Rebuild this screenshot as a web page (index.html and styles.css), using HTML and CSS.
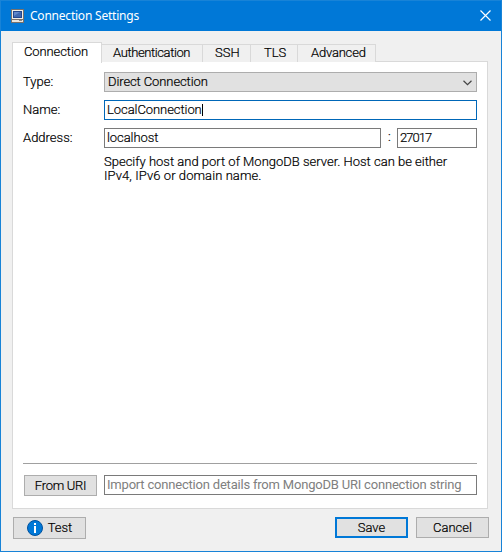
FILE: index.html
```html
<!DOCTYPE html>
<html lang="en">
<head>
<meta charset="utf-8">
<title>Connection Settings</title>
<link rel="stylesheet" href="styles.css">
</head>
<body>
<div class="window">
  <header class="titlebar">
    <svg class="app-icon" width="13" height="14" viewBox="0 0 13 14">
      <rect x="0" y="0" width="13" height="14" fill="#77716c"/>
      <rect x="1" y="1" width="11" height="9" fill="#f1eee8"/>
      <rect x="2" y="2" width="9" height="7" fill="#24488f"/>
      <rect x="3" y="3" width="7" height="5" fill="#6288cb"/>
      <path d="M3 8V7L9 3H10V8Z" fill="#3f68b0"/>
      <rect x="1" y="11" width="11" height="2" fill="#e9e4dc"/>
      <rect x="8" y="11" width="3" height="1" fill="#8a8580"/>
    </svg>
    <span class="title">Connection Settings</span>
    <svg class="close" width="11" height="11" viewBox="0 0 11 11"><path d="M.5 .5L10.500 10.500M10.500 .5L.5 10.500" stroke="#fff" stroke-width="1.15"/></svg>
  </header>
  <nav class="tabs">
    <div class="tab tab-active"><span class="t-connection">Connection</span></div>
    <div class="tab tab-auth"><span class="t-auth">Authentication</span></div>
    <div class="tab tab-ssh"><span class="t-ssh">SSH</span></div>
    <div class="tab tab-tls"><span class="t-tls">TLS</span></div>
    <div class="tab tab-adv"><span class="t-adv">Advanced</span></div>
  </nav>
  <main class="panel">
    <div class="row">
      <span class="label"><span class="t-type">Type:</span></span>
      <div class="field select"><span class="t-direct">Direct Connection</span>
        <svg class="chevron" width="9" height="6" viewBox="0 0 9 6"><path d="M.5 .8L4.500 4.700L8.500 .8" fill="none" stroke="#444" stroke-width="1.2"/></svg>
      </div>
    </div>
    <div class="row">
      <span class="label"><span class="t-name">Name:</span></span>
      <div class="field focused"><span class="t-local">LocalConnection</span><i class="caret"></i></div>
    </div>
    <div class="row">
      <span class="label"><span class="t-address">Address:</span></span>
      <div class="field"><span class="t-host">localhost</span></div>
      <span class="colon">:</span>
      <div class="field port"><span class="t-port">27017</span></div>
    </div>
    <p class="help"><span class="t-help1">Specify host and port of MongoDB server. Host can be either</span><br><span class="t-help2">IPv4, IPv6 or domain name.</span></p>
    <div class="rule"></div>
    <div class="uri">
      <div class="button"><span class="t-uri">From URI</span></div>
      <div class="field placeholder"><span class="t-import">Import connection details from MongoDB URI connection string</span></div>
    </div>
  </main>
  <footer class="footer">
    <div class="button test">
      <svg width="16" height="16" viewBox="0 0 16 16"><circle cx="8" cy="8" r="7.500" fill="#0078d7" stroke="#00519e"/><rect x="7" y="3" width="2" height="2" fill="#fff"/><rect x="7" y="6" width="2" height="7" fill="#fff"/></svg>
      <span class="t-test">Test</span>
    </div>
    <div class="button save"><span class="t-save">Save</span></div>
    <div class="button"><span class="t-cancel">Cancel</span></div>
  </footer>
</div>
</body>
</html>
```
FILE: styles.css
```css
* { box-sizing: border-box; }
body { margin: 0; font: 300 13px/14px Roboto, "Liberation Sans", sans-serif; color: #000; -webkit-text-stroke: 0.2px; }
span { white-space: nowrap; }
.window { width: 502px; height: 552px; background: #f0f0f0; border: 1px solid #1883d7; display: flex; flex-direction: column; }
.titlebar { height: 30px; flex: none; background: #0078d7; color: #fff; display: flex; align-items: center; padding: 0 10px; -webkit-text-stroke: 0; }
.app-icon { margin-right: 6px; margin-top: -1px; }
.title { font: 12px/16px "Noto Sans", sans-serif; letter-spacing: -0.22px; }
.close { margin: -1px 0 0 auto; }
.tabs { height: 31px; flex: none; margin-left: 11px; display: flex; align-items: flex-end; position: relative; z-index: 1; }
.tab { height: 18px; background: #f0f0f0; border-top: 1px solid #d9d9d9; border-right: 1px solid #d9d9d9; padding-left: 11px; line-height: 16px; }
.tab-active { height: 21px; width: 90px; margin-bottom: -1px; background: #fff; border-left: 1px solid #d9d9d9; line-height: 17px; }
.tab-auth { width: 101px; }
.tab-ssh { width: 48px; padding-left: 12px; }
.tab-tls { width: 47px; padding-left: 13px; }
.tab-adv { width: 78px; padding-left: 13px; }
.panel { height: 448px; flex: none; margin: -1px 13px 0 11px; background: #fff; border: 1px solid #d9d9d9; padding: 10px 10px 12px; display: flex; flex-direction: column; }
.row { display: flex; height: 20px; margin-bottom: 8px; flex: none; }
.label { width: 81px; line-height: 19px; flex: none; }
.field { flex: 1; height: 20px; border: 1px solid #7a7a7a; background: #fff; padding-left: 2px; line-height: 18px; display: flex; align-items: center; }
.select { background: #e1e1e1; border-color: #adadad; padding-left: 3px; }
.chevron { margin: 2px 4px 0 auto; }
.focused { border-color: #0067b8; }
.caret { width: 1px; height: 12px; background: #000; }
.colon { width: 16px; padding-left: 7px; line-height: 18px; }
.port { flex: none; width: 80px; }
.help { margin: -1px 0 0 81px; line-height: 14px; }
.rule { height: 1px; background: #a0a0a0; margin-top: auto; flex: none; }
.uri { display: flex; margin-top: 11px; padding-left: 1px; gap: 7px; flex: none; }
.button { width: 73px; height: 21px; flex: none; border: 1px solid #adadad; background: #e1e1e1; display: flex; align-items: center; justify-content: center; }
.placeholder { color: #808080; font-weight: 400; -webkit-text-stroke: 0; }
.footer { display: flex; margin: 8px 12px 0; align-items: flex-start; gap: 8px; }
.test { height: 22px; margin-right: auto; gap: 5px; }
.save { border: 2px solid #0078d7; }
.t-connection { letter-spacing: -0.1px; }
.t-auth { letter-spacing: -0.4px; }
.t-adv { letter-spacing: -0.2px; }
.t-direct { letter-spacing: -0.1px; }
.t-local, .t-host { letter-spacing: -0.07px; }
.t-port { letter-spacing: -0.95px; }
.t-help2 { letter-spacing: 0.08px; }
.t-uri { letter-spacing: -0.3px; }
.t-import { letter-spacing: -0.2px; }
```
